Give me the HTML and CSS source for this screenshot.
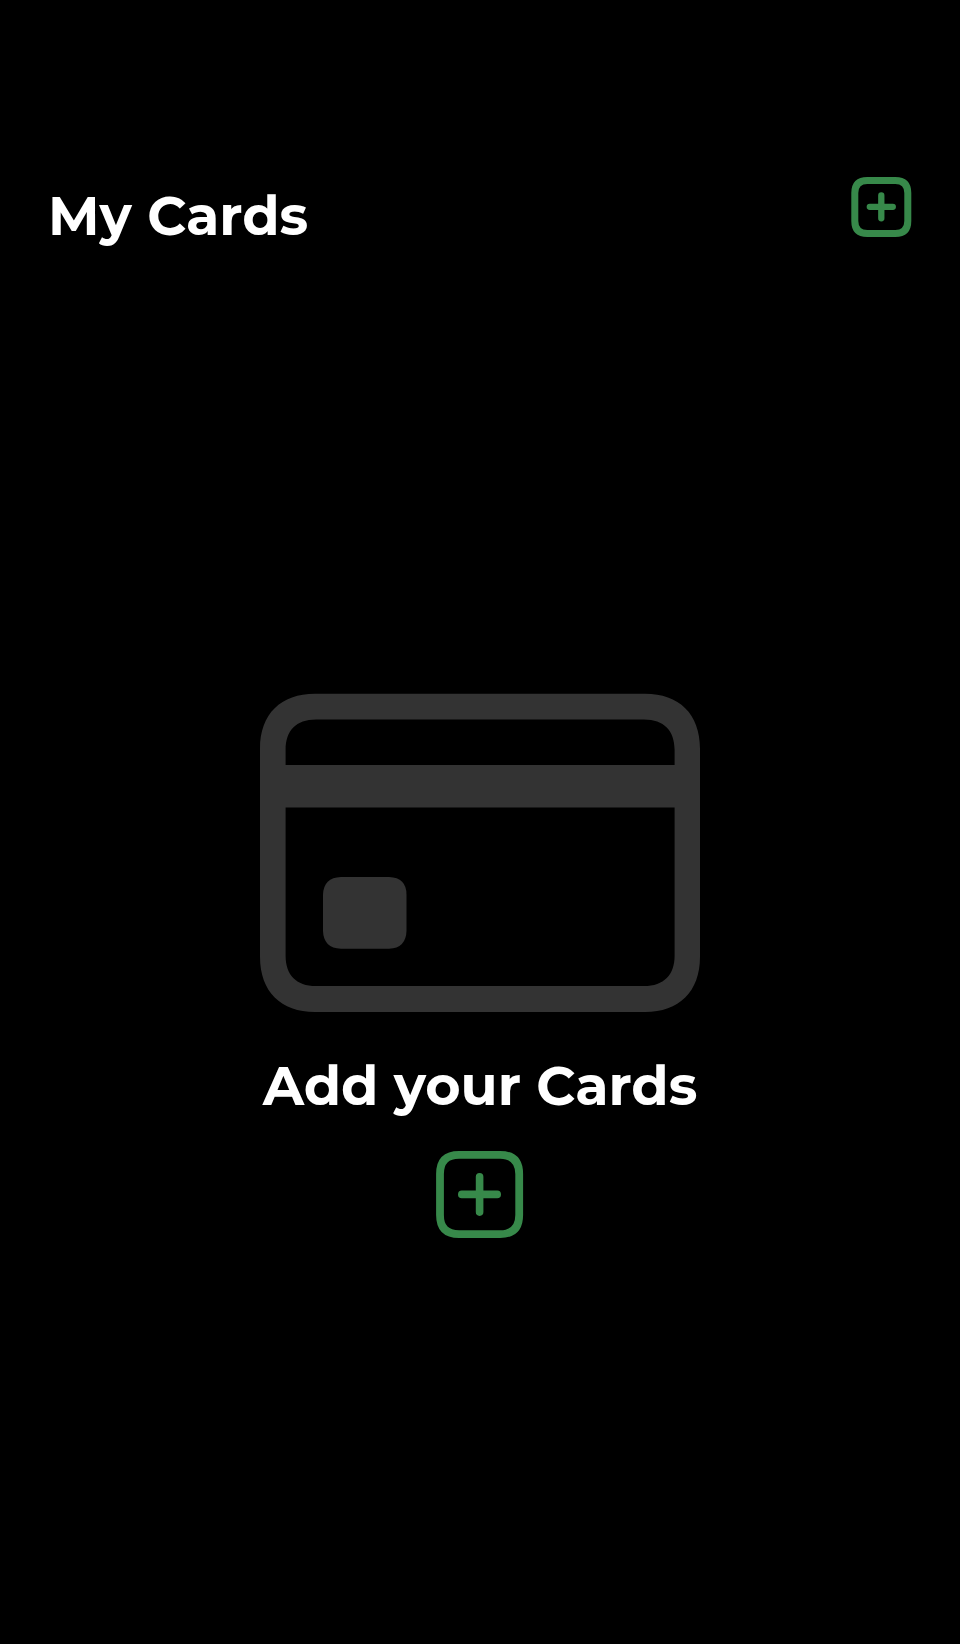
FILE: index.html
```html
<!DOCTYPE html>
<html lang="en">
<head>
<meta charset="utf-8">
<title>My Cards</title>
<link rel="stylesheet" href="styles.css">
</head>
<body>
<main class="screen">
  <header class="header">
    <h1 class="title">My Cards</h1>
    <svg class="add-small" viewBox="-0.3 0 61 61" role="img" aria-label="Add card">
      <path class="frame-small" d="M16 3.5H44Q56.5 3.5 56.5 16V44Q56.5 56.5 44 56.5H16Q3.5 56.5 3.5 44V16Q3.5 3.5 16 3.5Z"/>
      <path class="plus-small" d="M30 18.4V41.3M18.5 29.8H41.5"/>
    </svg>
  </header>
  <section class="empty">
    <svg class="card" viewBox="0 -0.7 440 320" aria-hidden="true">
      <path fill-rule="evenodd" d="M55 0H385C419 0 440 20 440 55V263C440 298 419 318.3 385 318.3H55C21 318.3 0 298 0 263V55C0 20 21 0 55 0ZM56 25.7C36 25.7 25.6 37 25.6 56V71.3H414.6V56C414.6 37 404 25.7 384 25.7ZM25.6 113.7V262C25.6 281 36 292.3 56 292.3H384C404 292.3 414.6 281 414.6 262V113.7Z"/>
      <path d="M81 183.3H129Q146.5 184 146.5 201V237Q146 254.5 129 255H81Q63.5 254.5 63 237V201Q63.5 184 81 183.3Z"/>
    </svg>
    <h2 class="title caption">Add your Cards</h2>
    <svg class="add-large" viewBox="-0.1 0 88 88" role="img" aria-label="Add your cards">
      <path class="frame-large" d="M23 3.9H64Q83.1 3.9 83.1 23V64Q83.1 83.1 64 83.1H23Q3.9 83.1 3.9 64V23Q3.9 3.9 23 3.9Z"/>
      <path class="plus-large" d="M43.5 25.7V61.1M25.7 43.4H61.1"/>
    </svg>
  </section>
</main>
</body>
</html>
```
FILE: styles.css
```css
body {
  margin: 0;
  background: #000;
}
.screen {
  box-sizing: border-box;
  width: 960px;
  height: 1644px;
  padding-top: 177px;
  color: #fff;
}
.header {
  display: flex;
  justify-content: space-between;
  align-items: flex-start;
  height: 100px;
  padding: 0 48px;
}
.title {
  margin: 7px 0 0;
  font: 700 54px/64px Montserrat, Inter, sans-serif;
  white-space: nowrap;
}
.add-small {
  width: 61px;
  height: 61px;
}
.frame-small, .plus-small, .frame-large, .plus-large {
  fill: none;
  stroke: #37894a;
  stroke-linecap: round;
}
.frame-small { stroke-width: 7; }
.plus-small { stroke-width: 6.3; }
.frame-large { stroke-width: 7.8; }
.plus-large { stroke-width: 7.6; }
.empty {
  display: flex;
  flex-direction: column;
  align-items: center;
  padding-top: 416px;
}
.card {
  width: 440px;
  height: 320px;
  fill: #333;
}
.caption { margin-top: 41px; }
.add-large {
  width: 88px;
  height: 88px;
  margin-top: 33px;
}
```
